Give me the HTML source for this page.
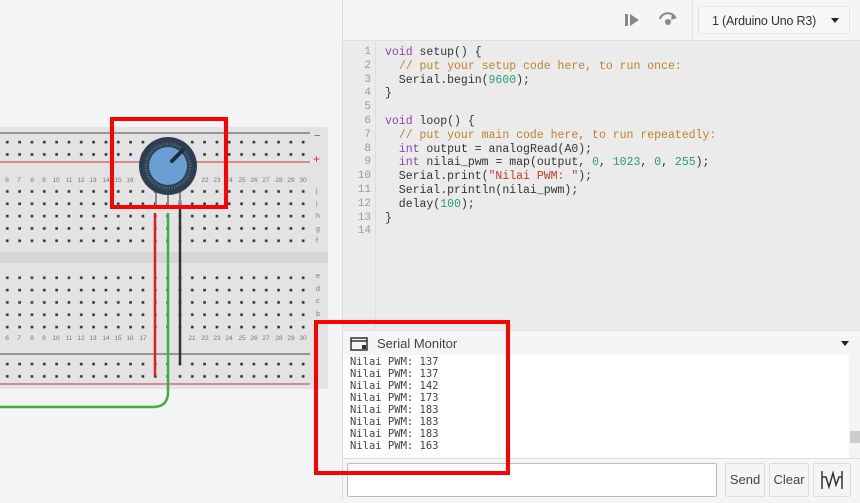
<!DOCTYPE html>
<html><head><meta charset="utf-8"><style>
*{margin:0;padding:0;box-sizing:border-box}
body{width:860px;height:499px;overflow:hidden;background:#f3f4f6;font-family:"Liberation Sans",sans-serif;position:relative}
#right{position:absolute;left:342px;top:0;width:518px;height:499px;background:#f4f5f7;border-left:1px solid #dcdcdc}
#tb{position:absolute;left:0;top:0;width:518px;height:41px;background:#f4f5f7;border-bottom:1px solid #e0e0e0}
#dd{position:absolute;left:355px;top:6px;width:152px;height:28px;background:#f6f7f9;border:1px solid #e4e4e4;border-radius:3px;font-size:12.5px;letter-spacing:-0.2px;color:#333;padding:7px 0 0 13px}
#code{position:absolute;left:0;top:41px;width:518px;height:289px;background:#ebebeb}
#gut{position:absolute;left:0;top:0;width:33px;height:289px;border-right:1px solid #dedede;font:11px "Liberation Mono",monospace;color:#999;text-align:right;padding:5px 4px 0 0;line-height:13.8px}
pre{position:absolute;left:42px;top:5px;font:11.5px "Liberation Mono",monospace;line-height:13.8px;color:#333}
.k{color:#8e44ad}.c{color:#c0802a}.n{color:#2a9a7a}.s{color:#c0392b}
#smh{position:absolute;left:0;top:330px;width:518px;height:25px;background:#f4f5f7;border-top:1px solid #e2e2e2;font-size:13px;color:#444;padding:5px 0 0 34px}
#out{position:absolute;left:0;top:355px;width:518px;height:104px;background:#fff;font:10.5px "DejaVu Sans Mono","Liberation Mono",monospace;color:#444;line-height:12px;padding:1px 0 0 7px;border-bottom:1px solid #ddd}
.btn{position:absolute;top:463px;height:34px;border:1px solid #ddd;background:#f4f5f7;border-radius:2px;font-size:13px;color:#444;text-align:center;line-height:32px}
</style></head><body>
<svg width="342" height="499" style="position:absolute;left:0;top:0">
<defs>
<pattern id="h" x="0.8" y="0" width="12.33" height="12.33" patternUnits="userSpaceOnUse"><rect x="5.2" y="5.2" width="2.6" height="2.6" fill="#333"/></pattern>
</defs>
<rect x="-5" y="127" width="333" height="262" rx="3" fill="#e3e3e3"/>
<rect x="-5" y="252" width="333" height="11" fill="#d6d6d6"/>
<line x1="0" y1="133" x2="310" y2="133" stroke="#444" stroke-width="1"/>
<line x1="0" y1="162" x2="310" y2="162" stroke="#c33" stroke-width="1"/>
<line x1="0" y1="354" x2="310" y2="354" stroke="#444" stroke-width="1"/>
<line x1="0" y1="384" x2="310" y2="384" stroke="#c33" stroke-width="1"/>
<g fill="url(#h)">
<rect x="0" y="134.5" width="310" height="25"/>
<rect x="0" y="184" width="310" height="62"/>
<rect x="0" y="269.5" width="310" height="62"/>
<rect x="0" y="357" width="310" height="25"/>
</g>
<text x="314" y="139" font-size="11" fill="#666">−</text>
<text x="313" y="163" font-size="12" fill="#c33">+</text>
<g font-size="7" fill="#777" font-family="Liberation Sans">
<text x="316" y="193">j</text><text x="316" y="206">i</text><text x="316" y="218">h</text><text x="316" y="231">g</text><text x="316" y="243">f</text>
<text x="316" y="278">e</text><text x="316" y="291">d</text><text x="316" y="303">c</text><text x="316" y="316">b</text>
</g>
<g font-size="6.5" fill="#777" text-anchor="middle">
<text x="7" y="182">6</text><text x="19" y="182">7</text><text x="32" y="182">8</text><text x="44" y="182">9</text><text x="56" y="182">10</text><text x="69" y="182">11</text><text x="81" y="182">12</text><text x="93" y="182">13</text><text x="106" y="182">14</text><text x="118" y="182">15</text><text x="130" y="182">16</text><text x="205" y="182">22</text><text x="217" y="182">23</text><text x="229" y="182">24</text><text x="242" y="182">25</text><text x="254" y="182">26</text><text x="266" y="182">27</text><text x="279" y="182">28</text><text x="291" y="182">29</text><text x="303" y="182">30</text>
<text x="7" y="340">6</text><text x="19" y="340">7</text><text x="32" y="340">8</text><text x="44" y="340">9</text><text x="56" y="340">10</text><text x="69" y="340">11</text><text x="81" y="340">12</text><text x="93" y="340">13</text><text x="106" y="340">14</text><text x="118" y="340">15</text><text x="130" y="340">16</text><text x="143" y="340">17</text><text x="192" y="340">21</text><text x="205" y="340">22</text><text x="217" y="340">23</text><text x="229" y="340">24</text><text x="242" y="340">25</text><text x="254" y="340">26</text><text x="266" y="340">27</text><text x="279" y="340">28</text><text x="291" y="340">29</text><text x="303" y="340">30</text>
</g>
<path d="M168 213 V392 Q168 407 153 407 H0" fill="none" stroke="#3cb043" stroke-width="2.5"/>
<line x1="155" y1="213" x2="155" y2="376" stroke="#e02020" stroke-width="2.5"/>
<line x1="180" y1="200" x2="180" y2="364" stroke="#333" stroke-width="2.5"/>
<g stroke="#888" stroke-width="2"><line x1="156" y1="190" x2="156" y2="206"/><line x1="168" y1="190" x2="168" y2="206"/><line x1="180" y1="190" x2="180" y2="206"/></g>
<circle cx="168" cy="166" r="29" fill="#2c3e50"/>
<circle cx="168" cy="166" r="22" fill="none" stroke="#5a6a7a" stroke-width="3" stroke-dasharray="1 1.5"/>
<circle cx="168" cy="166" r="19" fill="#6a9fd4"/>
<line x1="172" y1="161" x2="183" y2="150" stroke="#1f2d3a" stroke-width="4" stroke-linecap="round"/>
<rect x="112" y="119" width="114" height="88" fill="none" stroke="#f00" stroke-width="4"/>
</svg>
<div id="right">
<div id="tb">
<svg width="20" height="16" style="position:absolute;left:280px;top:12px"><rect x="2" y="2" width="3" height="12" fill="#888"/><path d="M7 2 L16 8 L7 14Z" fill="#888"/></svg>
<svg width="22" height="16" style="position:absolute;left:314px;top:11px"><path d="M3 8 A8 7 0 0 1 18 6" fill="none" stroke="#888" stroke-width="2"/><path d="M15 3 L20 7 L14 9Z" fill="#888"/><circle cx="11" cy="11" r="3" fill="#888"/></svg>
<div style="position:absolute;left:349px;top:0;width:1px;height:41px;background:#e2e2e2"></div>
<div id="dd">1 (Arduino Uno R3)<span style="position:absolute;right:10px;top:11px;border:4px solid transparent;border-top:5px solid #222"></span></div>
</div>
<div id="code"><div id="gut">1<br>2<br>3<br>4<br>5<br>6<br>7<br>8<br>9<br>10<br>11<br>12<br>13<br>14</div>
<pre><span class="k">void</span> setup() {
  <span class="c">// put your setup code here, to run once:</span>
  Serial.begin(<span class="n">9600</span>);
}

<span class="k">void</span> loop() {
  <span class="c">// put your main code here, to run repeatedly:</span>
  <span class="k">int</span> output = analogRead(A0);
  <span class="k">int</span> nilai_pwm = map(output, <span class="n">0</span>, <span class="n">1023</span>, <span class="n">0</span>, <span class="n">255</span>);
  Serial.print(<span class="s">"Nilai PWM: "</span>);
  Serial.println(nilai_pwm);
  delay(<span class="n">100</span>);
}</pre></div>
<div id="smh"><svg width="18" height="14" style="position:absolute;left:7px;top:6px"><rect x="1" y="1" width="16" height="12" fill="none" stroke="#333" stroke-width="1.5"/><line x1="1" y1="4" x2="17" y2="4" stroke="#333" stroke-width="1.5"/><rect x="12" y="8" width="4" height="4" fill="#333"/></svg>Serial Monitor<span style="position:absolute;right:12px;top:10px;border:4px solid transparent;border-top:5px solid #222"></span></div>
<div id="out">Nilai PWM: 137<br>Nilai PWM: 137<br>Nilai PWM: 142<br>Nilai PWM: 173<br>Nilai PWM: 183<br>Nilai PWM: 183<br>Nilai PWM: 183<br>Nilai PWM: 163
<div style="position:absolute;right:0;top:0;width:12px;height:103px;background:#f4f4f4"><div style="position:absolute;top:76px;left:1px;width:10px;height:12px;background:#ccc"></div></div></div>
<div style="position:absolute;left:4px;top:463px;width:370px;height:34px;background:#fff;border:1px solid #bbb;border-radius:2px"></div>
<div class="btn" style="left:382px;width:40px">Send</div>
<div class="btn" style="left:426px;width:40px">Clear</div>
<div class="btn" style="left:470px;width:38px"><svg width="24" height="22" style="margin-top:5px"><path d="M2 2V20M2 8L6 8L9 18L13 4L16 16L19 8L22 8M22 2V20" fill="none" stroke="#333" stroke-width="1.5"/></svg></div>
</div>
<div style="position:absolute;left:314px;top:320px;width:196px;height:155px;border:4px solid #f00"></div>
</body></html>
